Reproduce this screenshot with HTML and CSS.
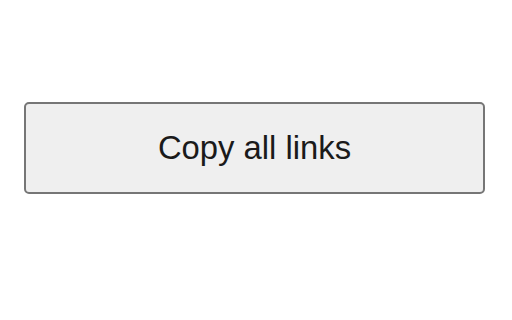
FILE: index.html
```html
<!DOCTYPE html>
<html>
<head>
<meta charset="utf-8">
<link rel="stylesheet" href="styles.css">
</head>
<body>
<div class="page">
  <button class="copy-btn">Copy all links</button>
</div>
</body>
</html>
```
FILE: styles.css
```css
html, body {
  margin: 0;
  padding: 0;
  background: #ffffff;
}
.page {
  padding: 102px 0 0 24px;
}
.copy-btn {
  display: flex;
  align-items: center;
  justify-content: center;
  box-sizing: border-box;
  width: 461px;
  height: 92px;
  margin: 0;
  padding: 0;
  background: #efefef;
  border: 2px solid #767676;
  border-radius: 5px;
  font-family: "Liberation Sans", Arial, sans-serif;
  font-size: 32.8px;
  color: #1a1a1a;
}
```
